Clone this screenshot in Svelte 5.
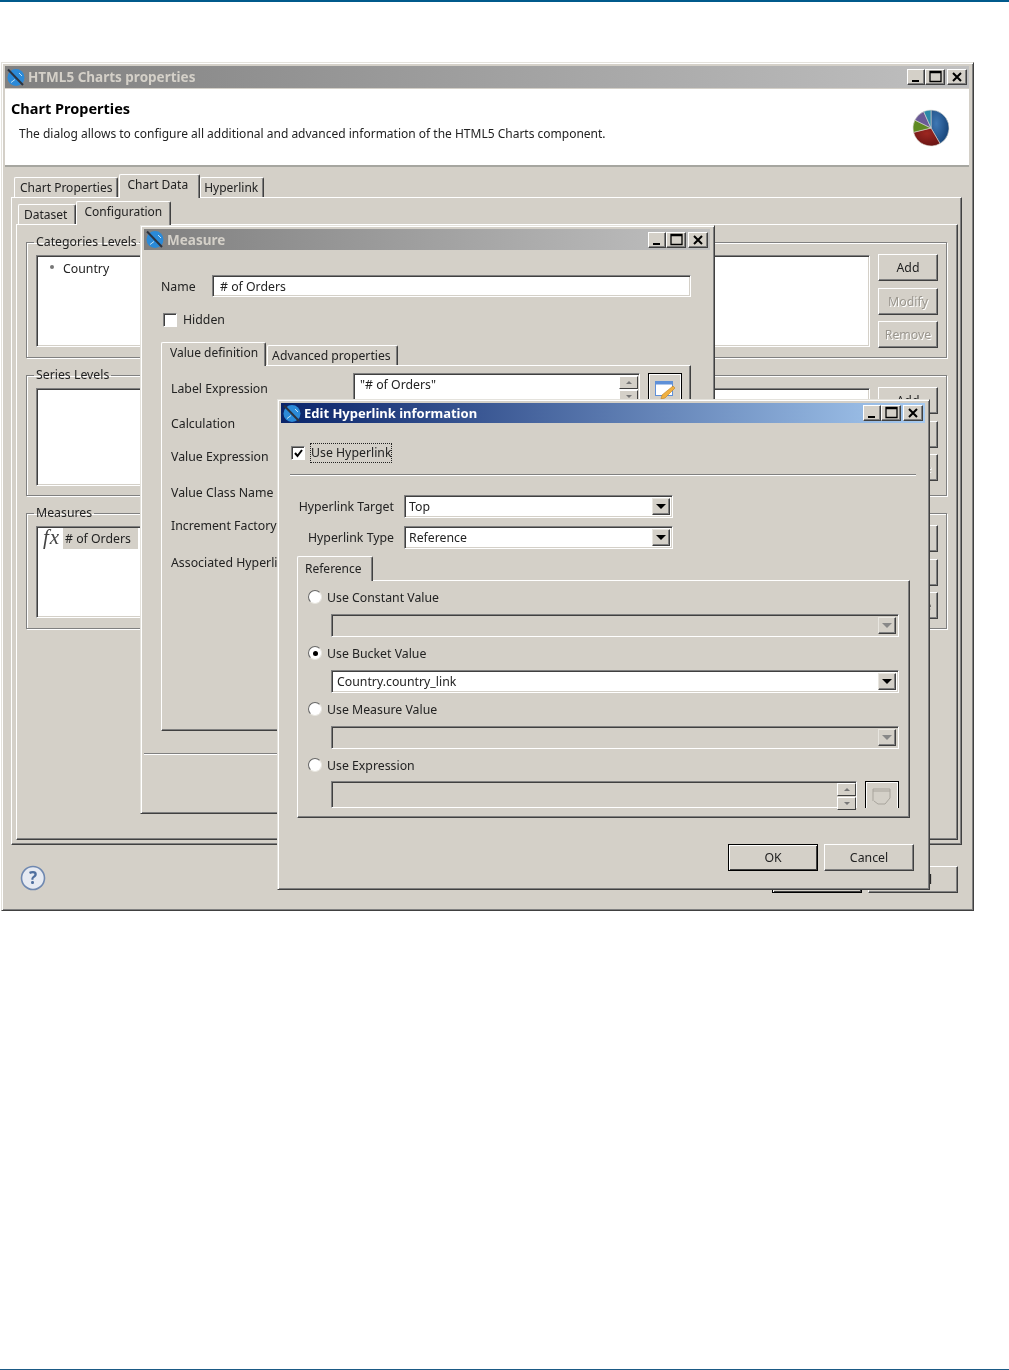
<script>
  // slices of the little pie chart in the dialog header, degrees clockwise from 12
  const slices = [
    { from: 0, to: 150, color: 'url(#pBlue)' },
    { from: 150, to: 256, color: 'url(#pRed)' },
    { from: 256, to: 296, color: '#5f8a22' },
    { from: 296, to: 336, color: '#6b5a96' },
    { from: 336, to: 360, color: '#2b8aa8' }
  ];

  function slicePath(s) {
    const pt = (a) => {
      const r = ((a - 90) * Math.PI) / 180;
      return `${(19 + 18 * Math.cos(r)).toFixed(2)} ${(19 + 18 * Math.sin(r)).toFixed(2)}`;
    };
    const large = s.to - s.from > 180 ? 1 : 0;
    return `M19 19 L${pt(s.from)} A18 18 0 ${large} 1 ${pt(s.to)} Z`;
  }

  const radios = [
    { label: 'Use Constant Value', value: '', on: false },
    { label: 'Use Bucket Value', value: 'Country.country_link', on: true },
    { label: 'Use Measure Value', value: '', on: false }
  ];
</script>

{#snippet appIcon()}
  <svg class="app-icon" width="19" height="19" viewBox="0 0 19 19">
    <circle cx="10" cy="9.5" r="8.5" fill="#2b8ad8" />
    <path d="M5 14.5l4-3M13 5l3 3" stroke="#bfe2f8" stroke-width="1" />
    <path d="M2 1.5 L17 17" stroke="#2c3340" stroke-width="2" />
  </svg>
{/snippet}

{#snippet winButtons()}
  <div class="win-btns">
    <button class="wbtn min" aria-label="Minimize"><svg width="16" height="14"><path d="M4 11h7" stroke="#000" stroke-width="2" /></svg></button>
    <button class="wbtn max" aria-label="Maximize"><svg width="16" height="14"><path d="M3 1.5h11v10H3zM3 2.5h11" fill="none" stroke="#000" stroke-width="1.3" /></svg></button>
    <button class="wbtn close" aria-label="Close"><svg width="16" height="14"><path d="M4 3l8 8M12 3l-8 8" stroke="#000" stroke-width="2" /></svg></button>
  </div>
{/snippet}

{#snippet titlebar(text, active)}
  <div class="titlebar" class:active>
    {@render appIcon()}
    <span class="title-text">{text}</span>
    {@render winButtons()}
  </div>
{/snippet}

{#snippet editIcon(off)}
  <svg width="22" height="22" viewBox="0 0 22 22">
    {#if off}
      <path d="M2 16V4h17v9l-5 6H7l-4-3M2 6h17" fill="none" stroke="#a8a49c" stroke-width="1" />
    {:else}
      <rect x="1.5" y="2.5" width="17" height="14" fill="#fff" stroke="#5f90d8" />
      <rect x="1.5" y="2.5" width="17" height="3" fill="#5f90d8" />
      <path d="M19 7l2 2-10 10-4 1 1-4z" fill="#f0b040" stroke="#c08020" stroke-width=".6" />
    {/if}
  </svg>
{/snippet}

{#snippet combo(value, off)}
  <div class="field combo" class:off>
    <span class="combo-value">{value}</span>
    <span class="arrow"><i></i></span>
  </div>
{/snippet}

{#snippet spinner()}
  <div class="spinner">
    <span class="spin"><i class="up"></i></span>
    <span class="spin"><i></i></span>
  </div>
{/snippet}

{#snippet sideButtons(off)}
  <div class="side-btns">
    <button class="btn">Add</button>
    <button class="btn" disabled={off}>Modify</button>
    <button class="btn" disabled={off}>Remove</button>
  </div>
{/snippet}

<div class="page">
  <!-- main dialog -->
  <section class="win main-win">
    {@render titlebar('HTML5 Charts properties', false)}
    <header class="dlg-head">
      <div>
        <h1>Chart Properties</h1>
        <p>The dialog allows to configure all additional and advanced information of the HTML5 Charts component.</p>
      </div>
      <svg class="pie" width="38" height="38" viewBox="0 0 38 38">
        <defs>
          <radialGradient id="pBlue" cx=".3" cy=".4" r=".9"><stop offset="0" stop-color="#3f78b4" /><stop offset="1" stop-color="#0c3668" /></radialGradient>
          <radialGradient id="pRed" cx=".5" cy=".3" r=".9"><stop offset="0" stop-color="#9c2620" /><stop offset="1" stop-color="#5c1010" /></radialGradient>
        </defs>
        {#each slices as s}
          <path d={slicePath(s)} fill={s.color} stroke="#d8d8d0" stroke-width=".6" />
        {/each}
      </svg>
    </header>

    <div class="tabs outer-tabs">
      <div class="tab">Chart Properties</div>
      <div class="tab on">Chart Data</div>
      <div class="tab">Hyperlink</div>
    </div>
    <div class="folder outer">
      <div class="tabs inner-tabs">
        <div class="tab">Dataset</div>
        <div class="tab on">Configuration</div>
      </div>
      <div class="folder inner">
        <fieldset class="group">
          <legend>Categories Levels</legend>
          <div class="list h92">
            <div class="item"><i class="bullet"></i>Country</div>
          </div>
          {@render sideButtons(true)}
        </fieldset>
        <fieldset class="group">
          <legend>Series Levels</legend>
          <div class="list h98"></div>
          {@render sideButtons(true)}
        </fieldset>
        <fieldset class="group">
          <legend>Measures</legend>
          <div class="list h92">
            <div class="item measure"><span class="fx">fx</span><span class="sel"># of Orders</span></div>
          </div>
          {@render sideButtons(false)}
        </fieldset>
      </div>
    </div>
    <footer class="dlg-foot">
      <svg class="help" width="26" height="26" viewBox="0 0 26 26">
        <circle cx="13" cy="13" r="11.5" fill="#e6eaf2" stroke="#6f88b0" stroke-width="1.6" />
        <text x="13" y="19" text-anchor="middle" class="help-q">?</text>
      </svg>
      <div class="foot-btns">
        <button class="btn wide default">OK</button>
        <button class="btn wide">Cancel</button>
      </div>
    </footer>
  </section>

  <!-- Measure dialog -->
  <section class="win measure-win">
    {@render titlebar('Measure', false)}
    <div class="m-body">
      <div class="m-name">
        <label for="mname">Name</label>
        <div class="field text" id="mname"># of Orders</div>
      </div>
      <div class="check-row m-hidden"><span class="check"></span>Hidden</div>
      <div class="tabs m-tabs">
        <div class="tab on">Value definition</div>
        <div class="tab">Advanced properties</div>
      </div>
      <div class="folder m-pane">
        <span>Label Expression</span>
        <div class="m-expr">
          <div class="field expr-field">
            <span class="combo-value">"# of Orders"</span>
            {@render spinner()}
          </div>
          <div class="icon-btn">{@render editIcon(false)}</div>
        </div>
        <span>Calculation</span>
        <span></span>
        <span>Value Expression</span>
        <span></span>
        <span>Value Class Name</span>
        <span></span>
        <span>Increment Factory</span>
        <span></span>
        <span class="nowrap">Associated Hyperlink</span>
      </div>
    </div>
    <div class="m-sep"></div>
  </section>

  <!-- Hyperlink dialog, the active one -->
  <section class="win link-win">
    {@render titlebar('Edit Hyperlink information', true)}
    <div class="l-body">
      <div class="check-row l-use"><span class="check on"><svg width="11" height="11"><path d="M2 5l2.5 3L9 2" fill="none" stroke="#000" stroke-width="2" /></svg></span><span class="focus">Use Hyperlink</span></div>
      <div class="l-sep"></div>
      <div class="l-form">
        <span>Hyperlink Target</span>
        {@render combo('Top', false)}
        <span>Hyperlink Type</span>
        {@render combo('Reference', false)}
      </div>
      <div class="tabs l-tabs">
        <div class="tab on">Reference</div>
      </div>
      <div class="folder l-pane">
        {#each radios as r}
          <div class="radio-row"><span class="radio" class:on={r.on}></span>{r.label}</div>
          <div class="l-field">{@render combo(r.value, !r.on)}</div>
        {/each}
        <div class="radio-row"><span class="radio"></span>Use Expression</div>
        <div class="l-field l-expr">
          <div class="field expr-off">{@render spinner()}</div>
          <div class="icon-btn off">{@render editIcon(true)}</div>
        </div>
      </div>
      <div class="l-btns">
        <button class="btn wide default">OK</button>
        <button class="btn wide">Cancel</button>
      </div>
    </div>
  </section>
</div>

<style>
  :global(body) {
    margin: 0;
    background: #fff;
  }

  .page {
    position: relative;
    box-sizing: border-box;
    height: 1370px;
    overflow: hidden;
    border-top: 2px solid #005a8c;
    border-bottom: 1px solid #1b5a85;
    font-family: "Noto Sans", sans-serif;
    font-size: 12.3px;
    color: #222;
    filter: blur(0.3px);
  }

  /* windows */
  .win {
    position: absolute;
    box-sizing: border-box;
    background: #d4d0c8;
    border: 1px solid;
    border-color: #e4e2dc #404040 #404040 #e4e2dc;
    box-shadow: inset 1px 1px 0 #fff, inset -1px -1px 0 #808080;
    padding: 3px 4px 3px 3px;
  }

  .main-win {
    left: 1px;
    top: 60px;
    width: 973px;
    height: 849px;
    display: flex;
    flex-direction: column;
  }

  .measure-win {
    left: 140px;
    top: 223px;
    width: 575px;
    height: 589px;
  }

  .link-win {
    left: 277px;
    top: 397px;
    width: 653px;
    height: 491px;
  }

  .titlebar {
    display: flex;
    align-items: center;
    height: 21px;
    flex: none;
    padding-left: 1px;
    background: linear-gradient(90deg, #808080, #c0c0c0);
    color: #d4d0c8;
    font-weight: 700;
    font-size: 13.5px;
  }

  .main-win .titlebar {
    height: 22px;
  }

  .titlebar.active {
    height: 20px;
    background: linear-gradient(90deg, #0a246a, #a6caf0);
    color: #fff;
    font-size: 13px;
  }

  .app-icon {
    flex: none;
    margin-right: 3px;
  }

  .title-text {
    flex: 1;
  }

  .win-btns {
    display: flex;
    margin-right: 2px;
  }

  .wbtn {
    box-sizing: border-box;
    width: 20px;
    height: 16px;
    padding: 0;
    display: flex;
    align-items: center;
    justify-content: center;
    background: #d4d0c8;
    border: 1px solid;
    border-color: #fff #404040 #404040 #fff;
    box-shadow: inset -1px -1px 0 #808080;
  }

  .wbtn.min {
    width: 18px;
  }

  .wbtn.close {
    margin-left: 2px;
  }

  /* bevels */
  .field {
    box-sizing: border-box;
    border: 1px solid;
    border-color: #808080 #fff #fff #808080;
    box-shadow: inset 1px 1px 0 #404040, inset -1px -1px 0 #d4d0c8;
    background: #fff;
  }

  .btn {
    box-sizing: border-box;
    width: 60px;
    height: 27px;
    padding: 0;
    font: inherit;
    color: #222;
    background: #d4d0c8;
    border: 1px solid;
    border-color: #fff #404040 #404040 #fff;
    box-shadow: inset -1px -1px 0 #808080;
  }

  .btn:disabled {
    color: #9a968e;
    text-shadow: 1px 1px 0 #fff;
  }

  .btn.wide {
    width: 90px;
  }

  .btn.default {
    border-color: #000;
    box-shadow: inset 1px 1px 0 #fff, inset -1px -1px 0 #404040;
  }

  /* tabs */
  .tabs {
    display: flex;
    align-items: flex-end;
    position: relative;
    z-index: 1;
    flex: none;
  }

  .tab {
    box-sizing: border-box;
    height: 20px;
    line-height: 19px;
    padding: 0 5px;
    font-size: 12px;
    white-space: nowrap;
    background: #d4d0c8;
    border: 1px solid;
    border-color: #fff #404040 transparent #fff;
    border-bottom: 0;
    border-radius: 2px 2px 0 0;
    box-shadow: inset -1px 0 0 #808080;
  }

  .tab.on {
    height: 24px;
    line-height: 20px;
    padding: 0 8px 4px 7px;
    margin-bottom: -1px;
  }

  .tab.on + .tab {
    padding-left: 3px;
  }

  .outer-tabs .tab.on {
    margin-left: 1px;
    padding-right: 11px;
  }

  .inner-tabs .tab:first-child {
    padding-right: 8px;
  }

  .m-tabs .tab.on {
    padding-left: 8px;
    padding-right: 7px;
  }

  .m-tabs .tab.on + .tab {
    margin-left: 1px;
    padding: 0 6px 0 4px;
    font-size: 12.2px;
  }

  .folder {
    box-sizing: border-box;
    background: #d4d0c8;
    border: 1px solid;
    border-color: #fff #404040 #404040 #fff;
    box-shadow: inset -1px -1px 0 #808080;
  }

  /* main dialog */
  .dlg-head {
    box-sizing: border-box;
    flex: none;
    display: flex;
    justify-content: space-between;
    height: 78px;
    margin-top: 1px;
    padding: 9px 19px 0 6px;
    background: #fff;
    border-bottom: 2px solid #a6a6a0;
  }

  h1 {
    margin: 0;
    font-size: 14.5px;
    line-height: 20px;
    color: #000;
  }

  .dlg-head p {
    margin: 7px 0 0 8px;
    font-size: 12px;
    line-height: 18px;
  }

  .pie {
    margin-top: 11px;
  }

  .outer-tabs {
    margin: 7px 0 0 9px;
  }

  .folder.outer {
    flex: none;
    height: 648px;
    width: 951px;
    margin-left: 6px;
    padding: 0 3px 4px 4px;
  }

  .inner-tabs {
    height: 26px;
    padding-left: 2px;
  }

  .folder.inner {
    height: 616px;
    padding: 9px 10px 0 9px;
  }

  .group {
    display: flex;
    gap: 8px;
    min-width: 0;
    margin: 0 0 9px;
    padding: 5px 8px 9px 9px;
    border: 1px solid #808080;
    box-shadow: 1px 1px 0 #fff, inset 1px 1px 0 #fff;
  }

  legend {
    margin-left: -2px;
    padding: 0 2px;
    line-height: 16px;
  }

  .group > .list {
    flex: 1;
  }

  .h92 {
    height: 92px;
  }

  .h98 {
    height: 98px;
  }

  .list {
    box-sizing: border-box;
    padding: 3px;
    background: #fff;
    border: 1px solid;
    border-color: #808080 #fff #fff #808080;
    box-shadow: inset 1px 1px 0 #404040, inset -1px -1px 0 #d4d0c8;
  }

  .item {
    display: flex;
    align-items: center;
    height: 18px;
  }

  .bullet {
    width: 4px;
    height: 4px;
    margin: -3px 9px 0 10px;
    border-radius: 50%;
    background: #777;
  }

  .measure {
    height: 21px;
    margin-top: -2px;
  }

  .fx {
    width: 23px;
    padding: 0 0 3px 3px;
    box-sizing: border-box;
    font: italic 21px "Liberation Serif", serif;
    letter-spacing: 1px;
    line-height: 16px;
    color: #444;
  }

  .sel {
    flex: none;
    width: 75px;
    padding: 2px 0 2px 2px;
    box-sizing: border-box;
    background: #d4d0c8;
  }

  .side-btns {
    display: flex;
    flex-direction: column;
    gap: 6.5px;
    margin-top: -1px;
  }

  .dlg-foot {
    display: flex;
    justify-content: space-between;
    padding: 21px 11px 0 15px;
  }

  .help {
    margin-top: -1px;
  }

  .help-q {
    font: 700 17px "Noto Sans", sans-serif;
    fill: #4f6f9f;
  }

  .foot-btns {
    display: flex;
    gap: 6px;
  }

  /* Measure dialog */
  .m-body {
    padding: 25px 19px 0 17px;
  }

  .m-name {
    display: flex;
    align-items: center;
  }

  .m-name label {
    width: 51px;
  }

  .field.text {
    flex: 1;
    height: 22px;
    line-height: 21px;
    padding-left: 7px;
  }

  .check-row {
    display: flex;
    align-items: center;
  }

  .check {
    box-sizing: border-box;
    display: flex;
    align-items: center;
    justify-content: center;
    width: 14px;
    height: 14px;
    margin-right: 6px;
    background: #fff;
    border: 1px solid;
    border-color: #808080 #fff #fff #808080;
    box-shadow: inset 1px 1px 0 #404040;
  }

  .m-hidden {
    margin: 14px 0 0 2px;
  }

  .m-tabs {
    margin-top: 14px;
  }

  .m-pane {
    display: grid;
    grid-template-columns: 182px 1fr;
    grid-template-rows: 35px 33px 36px 33px 37px 16px;
    height: 366px;
    padding: 15px 0 0 9px;
  }

  .m-pane > span {
    line-height: 16px;
  }

  .nowrap {
    white-space: nowrap;
  }

  .m-expr {
    display: flex;
    gap: 8px;
    height: 40px;
    margin-top: -8px;
  }

  .expr-field {
    display: flex;
    width: 287px;
    padding: 2px 1px 0 6px;
  }

  .combo-value {
    flex: 1;
    line-height: 18px;
  }

  .spinner {
    display: flex;
    flex-direction: column;
    gap: 1px;
    width: 19px;
    flex: none;
  }

  .spin {
    box-sizing: border-box;
    height: 13px;
    display: flex;
    align-items: center;
    justify-content: center;
    background: #d4d0c8;
    border: 1px solid;
    border-color: #fff #404040 #404040 #fff;
  }

  .spin i {
    border: 3px solid transparent;
    border-top-color: #777;
    border-bottom: 0;
  }

  .spin i.up {
    border-top: 0;
    border-bottom: 3px solid #777;
  }

  .icon-btn {
    box-sizing: border-box;
    width: 34px;
    height: 40px;
    padding: 5px 0 0 5px;
    border: 1px solid #000;
    border-bottom: 0;
    box-shadow: inset 1px 1px 0 #fff, inset -1px 0 0 #fff;
  }

  .m-sep {
    margin: 22px 0 0;
    height: 1px;
    background: #808080;
    box-shadow: 0 1px 0 #fff;
  }

  /* Hyperlink dialog */
  .l-body {
    padding: 0 9px 0 9px;
  }

  .l-use {
    margin: 21px 0 0 1px;
  }

  .focus {
    padding: 1px 0;
    line-height: 16px;
    outline: 1px dotted #222;
  }

  .l-sep {
    height: 1px;
    margin-top: 12px;
    background: #808080;
    box-shadow: 0 1px 0 #fff;
  }

  .l-form {
    display: grid;
    grid-template-columns: 104px 269px;
    column-gap: 10px;
    row-gap: 8px;
    align-items: center;
    margin-top: 20px;
  }

  .l-form > span {
    text-align: right;
    white-space: nowrap;
  }

  .combo {
    display: flex;
    height: 23px;
    padding: 2px 2px 2px 4px;
  }

  .combo.off {
    background: #d4d0c8;
  }

  .l-pane .combo {
    padding-left: 5px;
  }

  .arrow {
    box-sizing: border-box;
    width: 18px;
    display: flex;
    align-items: center;
    justify-content: center;
    background: #d4d0c8;
    border: 1px solid;
    border-color: #e8e6e0 #404040 #404040 #e8e6e0;
    box-shadow: inset -1px -1px 0 #808080;
  }

  .arrow i {
    border: 5px solid transparent;
    border-top-color: #000;
    border-bottom: 0;
  }

  .combo.off .arrow i {
    border-top-color: #888;
  }

  .l-tabs {
    margin: 7px 0 0 7px;
  }

  .l-tabs .tab.on {
    height: 25px;
    padding: 2px 10px 0 7px;
  }

  .l-pane {
    width: 613px;
    height: 238px;
    margin-left: 7px;
    padding: 7px 0 0 10px;
  }

  .radio-row {
    display: flex;
    align-items: center;
    height: 18px;
  }

  .radio {
    box-sizing: border-box;
    display: flex;
    align-items: center;
    justify-content: center;
    width: 14px;
    height: 14px;
    margin-right: 5px;
    border-radius: 50%;
    background: #fff;
    border: 1px solid;
    border-color: #666 #e8e6e0 #e8e6e0 #666;
  }

  .radio.on::after {
    content: "";
    width: 5px;
    height: 5px;
    border-radius: 50%;
    background: #000;
  }

  .l-field {
    width: 568px;
    margin: 8px 0 7px 23px;
  }

  .l-expr {
    display: flex;
    gap: 8px;
    margin-top: 7px;
    margin-bottom: 0;
  }

  .expr-off {
    flex: 1;
    height: 27px;
    display: flex;
    justify-content: flex-end;
    align-items: flex-start;
    background: #d4d0c8;
    padding: 1px 0;
  }

  .icon-btn.off {
    height: 27px;
    padding: 3px 0 0 5px;
  }

  .l-btns {
    display: flex;
    justify-content: flex-end;
    gap: 6px;
    margin: 26px 2px 0 0;
  }
</style>
